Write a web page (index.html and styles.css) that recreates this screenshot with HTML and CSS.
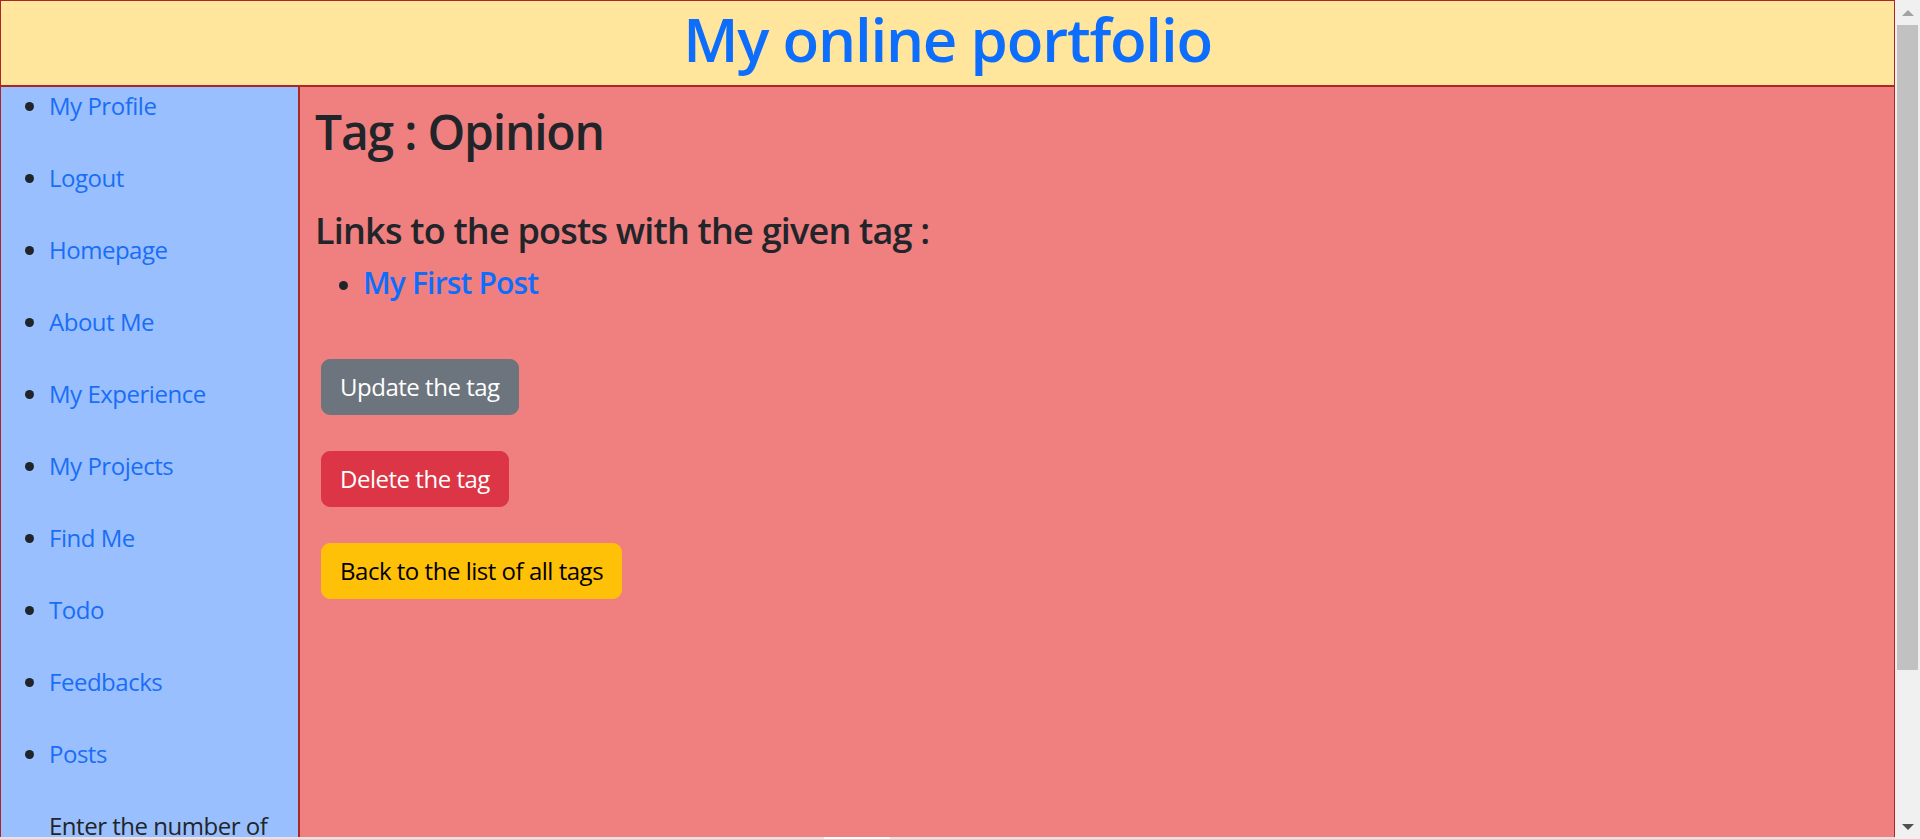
FILE: index.html
```html
<!DOCTYPE html>
<html lang="en">
<head>
<meta charset="utf-8">
<title>Tag : Opinion</title>
<link rel="stylesheet" href="styles.css">
</head>
<body>
<div class="window">
  <div class="page">
    <header class="site-header">
      <h1 class="site-title">My online portfolio</h1>
    </header>
    <div class="layout">
      <nav class="sidebar">
        <ul class="nav-list">
          <li><a href="#">My Profile</a></li>
          <li><a href="#">Logout</a></li>
          <li><a href="#">Homepage</a></li>
          <li><a href="#">About Me</a></li>
          <li><a href="#">My Experience</a></li>
          <li><a href="#">My Projects</a></li>
          <li><a href="#">Find Me</a></li>
          <li><a href="#">Todo</a></li>
          <li><a href="#">Feedbacks</a></li>
          <li><a href="#">Posts</a></li>
          <li class="form-item"><label>Enter the number of posts to show :</label></li>
        </ul>
      </nav>
      <main class="content">
        <h2 class="tag-title">Tag : Opinion</h2>
        <h4 class="links-title">Links to the posts with the given tag :</h4>
        <ul class="post-list">
          <li><h5 class="post-item"><a href="#">My First Post</a></h5></li>
        </ul>
        <div class="actions">
          <a href="#" class="btn btn-secondary">Update the tag</a>
          <a href="#" class="btn btn-danger">Delete the tag</a>
          <a href="#" class="btn btn-warning">Back to the list of all tags</a>
        </div>
      </main>
    </div>
    <div class="hscroll-edge"><span class="hscroll-thumb"></span></div>
  </div>
  <div class="vscroll">
    <div class="arrow-box"><span class="arrow-up"></span></div>
    <div class="track"><div class="thumb"></div></div>
    <div class="arrow-box"><span class="arrow-down"></span></div>
  </div>
</div>
</body>
</html>
```

FILE: styles.css
```css
html, body {
  margin: 0;
  padding: 0;
  height: 100%;
  overflow: hidden;
}

body {
  font-family: "Open Sans", "Noto Sans", sans-serif;
  font-size: 24px;
  line-height: 1.5;
  letter-spacing: -0.02em;
  color: #212529;
  background: #f0f0f0;
}

a {
  color: #0d6efd;
  text-decoration: none;
}

.window {
  display: flex;
  height: 839px;
}

.page {
  width: 1895px;
  display: flex;
  flex-direction: column;
  overflow: hidden;
}

.site-header {
  background: #ffe69c;
  border: 1px solid #ab2727;
  padding-top: 2px;
  text-align: center;
}

.site-title {
  margin: 0 0 10px;
  font-size: 60px;
  font-weight: 600;
  line-height: 72px;
  letter-spacing: -0.02em;
  color: #0d6efd;
}

.layout {
  flex: 1;
  display: flex;
  min-height: 0;
  overflow: hidden;
}

.sidebar {
  width: 297px;
  flex: none;
  background: #99bfff;
  border: 1px solid #ab2727;
  border-bottom: none;
  padding-top: 1px;
}

.nav-list {
  margin: 0;
  padding-left: 48px;
}

.nav-list li {
  line-height: 36px;
  margin-bottom: 36px;
}

.nav-list a {
  color: #1a6ef5;
}

.nav-list .form-item {
  list-style: none;
}

.content {
  flex: 1;
  background: #f08080;
  border: 1px solid #ab2727;
  border-bottom: none;
  padding: 16px 15px;
}

.tag-title {
  margin: 0;
  font-size: 48px;
  font-weight: 600;
  line-height: 1.2;
  letter-spacing: -0.025em;
}

.links-title {
  margin: 48px 0 0;
  font-size: 36px;
  font-weight: 600;
  line-height: 1.2;
  letter-spacing: -0.022em;
}

.post-list {
  margin: 13px 0 0;
  padding-left: 48px;
}

.post-item {
  margin: 0;
  font-size: 30px;
  font-weight: 600;
  line-height: 36px;
  letter-spacing: -0.028em;
}

.actions {
  margin-top: 58px;
  margin-left: 6px;
  display: flex;
  flex-direction: column;
  align-items: flex-start;
  gap: 36px;
}

.btn {
  display: inline-block;
  padding: 9px 18px;
  font-size: 24px;
  line-height: 36px;
  border: 1px solid transparent;
  border-radius: 9px;
}

.btn-secondary {
  background: #6c757d;
  border-color: #6c757d;
  color: #fff;
}

.btn-danger {
  background: #dc3545;
  border-color: #dc3545;
  color: #fff;
}

.btn-warning {
  background: #ffc107;
  border-color: #ffc107;
  color: #000;
}

.hscroll-edge {
  height: 2px;
  flex: none;
  background: #e4e4e4;
  display: flex;
}

.hscroll-thumb {
  width: 66px;
  margin-left: 824px;
  background: #ffffff;
}

.vscroll {
  width: 25px;
  flex: none;
  display: flex;
  flex-direction: column;
  background: #f0f0f0;
}

.arrow-box {
  height: 25px;
  flex: none;
  display: flex;
  align-items: center;
  justify-content: center;
}

.arrow-up {
  width: 0;
  height: 0;
  border-left: 6px solid transparent;
  border-right: 6px solid transparent;
  border-bottom: 6px solid #a3a3a3;
}

.arrow-down {
  width: 0;
  height: 0;
  border-left: 6px solid transparent;
  border-right: 6px solid transparent;
  border-top: 6px solid #505050;
}

.track {
  flex: 1;
  display: flex;
  flex-direction: column;
}

.thumb {
  height: 645px;
  margin: 0 2px;
  background: #c1c1c1;
}
```
